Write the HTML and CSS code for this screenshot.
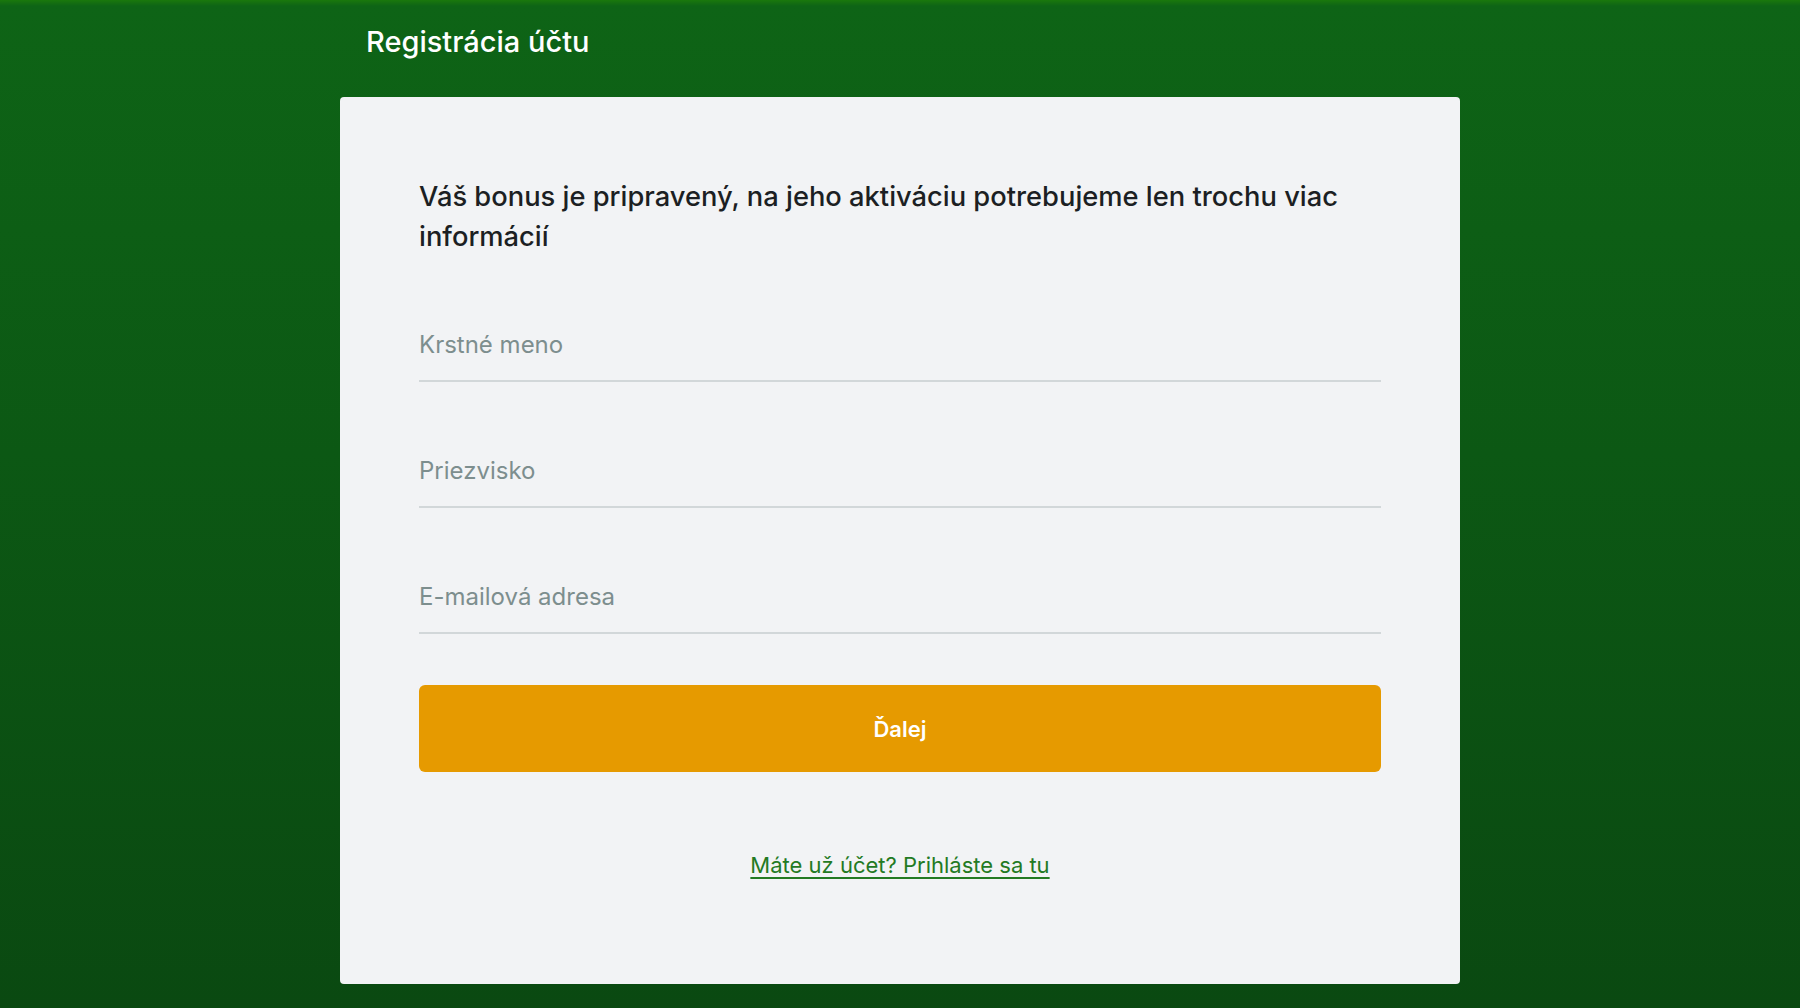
FILE: index.html
```html
<!DOCTYPE html>
<html lang="sk">
<head>
    <meta charset="UTF-8">
    <meta name="viewport" content="width=device-width, initial-scale=1.0">
    <title>Registrácia účtu</title>
    <link rel="stylesheet" href="styles.css">
</head>
<body>
    <div class="page">
        <header class="top">
            <h1>Registrácia účtu</h1>
        </header>
        <form class="card" id="registrationForm">
            <h2>Váš bonus je pripravený, na jeho aktiváciu potrebujeme len trochu viac informácií</h2>
            <div class="fields">
                <input type="text" name="first_name" placeholder="Krstné meno">
                <input type="text" name="last_name" placeholder="Priezvisko">
                <input type="email" name="email" placeholder="E-mailová adresa">
            </div>
            <button type="submit">Ďalej</button>
            <p class="login"><a href="#">Máte už účet? Prihláste sa tu</a></p>
        </form>
    </div>
</body>
</html>
```

FILE: styles.css
```css
html, body {
    height: 100%;
}
body {
    margin: 0;
    font-family: Inter, "Noto Sans", sans-serif;
    background: linear-gradient(180deg, #1a780c 0px, #0e6416 6px, #0c5814 45%, #0a4911 100%);
    overflow: hidden;
}
.page {
    width: 1120px;
    margin: 0 auto;
}
.top {
    height: 97px;
    padding: 0 26px;
    box-sizing: border-box;
}
.top h1 {
    margin: 0;
    padding-top: 24px;
    font-size: 29px;
    line-height: 36px;
    font-weight: 500;
    color: #fff;
}
.card {
    background-color: #f2f3f5;
    border-radius: 4px;
    padding: 80px 79px 105px 79px;
    display: flex;
    flex-direction: column;
}
.card h2 {
    margin: 0;
    font-size: 27.3px;
    line-height: 40px;
    font-weight: 500;
    color: #1c1f23;
}
.fields {
    display: flex;
    flex-direction: column;
    gap: 58px;
    margin-top: 57px;
}
.fields input {
    font-family: inherit;
    font-size: 24px;
    line-height: 29px;
    height: 68px;
    box-sizing: border-box;
    padding: 16px 0 21px;
    border: none;
    border-bottom: 2px solid #d2d7d9;
    background: transparent;
    color: #1c1f23;
    outline: none;
}
.fields input::placeholder {
    color: #7d8e8e;
}
button {
    margin-top: 51px;
    height: 87px;
    background-color: #e69a00;
    color: #fff;
    border: none;
    border-radius: 6px;
    font-family: inherit;
    font-size: 22px;
    font-weight: 600;
    cursor: pointer;
}
.login {
    margin: 79px 0 0;
    text-align: center;
    font-size: 22px;
    line-height: 28px;
}
.login a {
    color: #237a23;
    text-underline-offset: 4px;
    text-decoration-thickness: 2px;
}
```
